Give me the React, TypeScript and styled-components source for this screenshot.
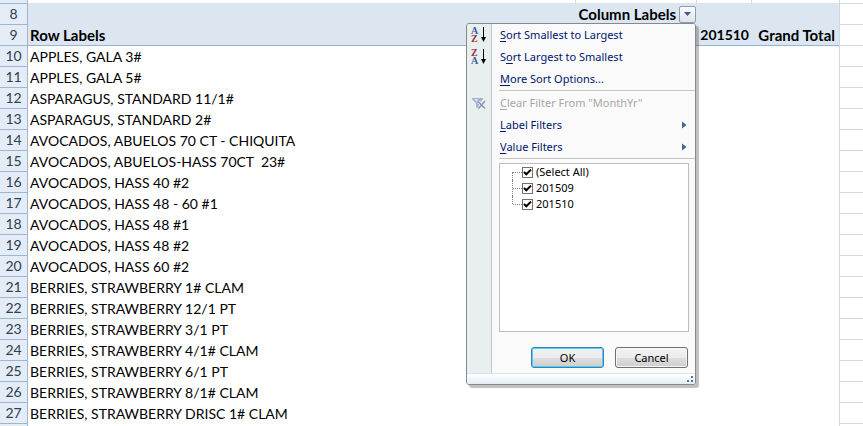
import React from "react";
import styled, { createGlobalStyle, css } from "styled-components";

const Global = createGlobalStyle`
  * { box-sizing: border-box; }
  html, body, #root { margin: 0; height: 100%; background: #fff; }
  body { overflow: hidden; }
  button, input { font: inherit; margin: 0; }
`;

const Sheet = styled.main`
  position: relative;
  min-height: 100%;
  font: 14px/20px Lato, sans-serif;
  color: #000;
`;

const Grid = styled.table`
  width: 100%;
  table-layout: fixed;
  border-collapse: separate;
  border-spacing: 0;
`;

const Col = styled.col<{ $w?: number }>`
  ${(p) => p.$w && css`width: ${p.$w}px;`}
`;

const RowNumber = styled.th`
  height: 21px;
  padding: 0;
  font-weight: 400;
  text-align: center;
  color: #2f4050;
  background: #e4ecf7;
  border-right: 1px solid #9eb6ce;
  border-bottom: 1px solid #9eb6ce;
`;

const Cell = styled.td`
  height: 21px;
  padding: 0 0 0 2px;
  white-space: pre;
`;

const HeadCell = styled.td<{ $last?: boolean; $right?: boolean; $number?: boolean }>`
  height: 21px;
  padding: 0 ${(p) => (p.$number ? 2 : 4)}px 0 2px;
  font-size: ${(p) => (p.$number ? 14 : 15)}px;
  font-weight: 700;
  white-space: nowrap;
  text-align: ${(p) => (p.$right ? "right" : "left")};
  background: #dce6f1;
  border-bottom: 1px solid ${(p) => (p.$last ? "#95b3d7" : "#dce6f1")};
`;

const EmptyCell = styled.td`
  padding: 0;
  border-left: 1px solid #d0d7e5;
  border-bottom: 1px solid #d0d7e5;
`;

const TopCell = styled.td<{ $line?: boolean; $head?: boolean; $outside?: boolean }>`
  height: 4px;
  padding: 0;
  background: ${(p) => (p.$head ? "#e4ecf7" : "#fff")};
  border-right: ${(p) => (p.$head ? "1px solid #9eb6ce" : "0")};
  border-left: ${(p) => (p.$line ? "1px solid #d0d7e5" : "0")};
  border-bottom: 1px solid ${(p) => (p.$head ? "#9eb6ce" : p.$outside ? "#d0d7e5" : "#dce6f1")};
`;

const LabelWithButton = styled.div`
  display: flex;
  justify-content: flex-end;
  align-items: center;
  gap: 3px;
  height: 20px;
  margin-right: -4px;
`;

const DropButton = styled.button`
  display: grid;
  place-items: center;
  width: 17px;
  height: 17px;
  padding: 0;
  border: 1px solid #8a9dbd;
  border-radius: 2px;
  background: linear-gradient(#fbfcfd, #dfe3e9);
`;

const Menu = styled.section`
  position: absolute;
  z-index: 1;
  top: 23px;
  left: 466px;
  width: 230px;
  border: 1px solid #868a8e;
  border-radius: 3px;
  background: #fafafa;
  box-shadow: 3px 3px 1px rgba(0, 0, 0, 0.25);
  font: 11px/16px "Noto Sans", sans-serif;
  overflow: hidden;
`;

const MenuBody = styled.div`
  padding-bottom: 5px;
  background: linear-gradient(to right, #e9eeee 24px, #c5c5c5 24px, #c5c5c5 25px, #fafafa 25px);
`;

const MenuItem = styled.button`
  display: grid;
  grid-template-columns: 25px 1fr 13px;
  align-items: center;
  width: 100%;
  height: 22px;
  padding: 0;
  border: 0;
  background: none;
  text-align: left;
  color: #00156e;
  &:disabled { color: #a7a7a7; }
`;

const ItemText = styled.span`
  padding-left: 8px;
  white-space: nowrap;
  u { text-underline-offset: 2px; }
`;

const Separator = styled.hr`
  height: 1px;
  margin: 0 0 1px 32px;
  border: 0;
  background: #c5c5c5;
`;

const CheckList = styled.div`
  height: 169px;
  margin: 4px 6px 0 32px;
  padding-left: 12px;
  border: 1px solid #bdbdbd;
  background: #fff;
`;

const CheckRow = styled.label<{ $place: "first" | "middle" | "last" }>`
  display: flex;
  align-items: center;
  height: 16px;
  color: #000;
  &::before {
    content: "";
    align-self: ${(p) => (p.$place === "first" ? "flex-end" : "flex-start")};
    width: 0;
    height: ${(p) => (p.$place === "middle" ? 16 : 8)}px;
    border-left: 1px dotted #808080;
  }
`;

const Branch = styled.span`
  width: 9px;
  border-top: 1px dotted #808080;
`;

const CheckInput = styled.input`
  appearance: none;
  width: 11px;
  height: 11px;
  margin-right: 3px;
  border: 1px solid #707070;
  background: #fff;
  &:checked {
    background: #fff url("data:image/svg+xml,%3Csvg xmlns='http://www.w3.org/2000/svg' viewBox='0 0 9 9'%3E%3Cpath d='M1 4 3.3 6.3 8 1.6' fill='none' stroke='black' stroke-width='2'/%3E%3C/svg%3E") center / 9px 9px no-repeat;
  }
`;

const Actions = styled.div`
  display: flex;
  justify-content: flex-end;
  gap: 11px;
  padding: 15px 7px 0 32px;
`;

const ActionButton = styled.button<{ $primary?: boolean }>`
  width: 73px;
  height: 21px;
  padding: 0;
  border: 1px solid ${(p) => (p.$primary ? "#3c7fb1" : "#707070")};
  border-radius: 3px;
  background: linear-gradient(#f2f2f2, #ebebeb 50%, #dddddd 50%, #cfcfcf);
  box-shadow: inset 0 0 0 1px ${(p) => (p.$primary ? "#48d1f5" : "#f7f7f7")};
  line-height: 16px;
  color: #000;
`;

const MenuFoot = styled.footer`
  display: flex;
  justify-content: flex-end;
  align-items: flex-end;
  height: 11px;
  padding: 0 1px 1px 0;
  border-top: 1px solid #d6e5ee;
  background: linear-gradient(#fff, #e2edf3);
`;

const SortIcon = ({ up }: { up?: boolean }) => (
  <svg width="24" height="20" viewBox="0 0 24 20" fontFamily="Liberation Serif, serif" fontWeight="700" fontSize="10">
    <text x="4" y="9" fill={up ? "#3e5c9e" : "#903538"}>{up ? "A" : "Z"}</text>
    <text x="4" y="17" fill={up ? "#903538" : "#3e5c9e"}>{up ? "Z" : "A"}</text>
    <path d="M16.500 2v12" stroke="#000" />
    <path d="M14 12h5l-2.500 5z" fill="#000" />
  </svg>
);

const ClearIcon = () => (
  <svg width="24" height="20" viewBox="0 0 24 20">
    <path d="M5 5h11v1l-4 4.500v6l-3-2.500v-3.500L5 6z" fill="#a3b2cc" />
    <path d="M7 6h4l-1 3z" fill="#dbe3ef" />
    <path d="M11.500 9l6.500 6.500M18 8l-6.500 7.500" stroke="#e9eeee" strokeWidth="3" />
    <path d="M11.500 9l6.500 6.500M18 8l-6.500 7.500" stroke="#8495b5" strokeWidth="1.500" />
  </svg>
);

const Arrow = () => (
  <svg width="5" height="8" viewBox="0 0 5 8"><path d="M0 0.500 4.500 4 0 7.500z" fill="#4a5f9e" /></svg>
);

const rows = [
  "APPLES, GALA 3#",
  "APPLES, GALA 5#",
  "ASPARAGUS, STANDARD 11/1#",
  "ASPARAGUS, STANDARD 2#",
  "AVOCADOS, ABUELOS 70 CT - CHIQUITA",
  "AVOCADOS, ABUELOS-HASS 70CT  23#",
  "AVOCADOS, HASS 40 #2",
  "AVOCADOS, HASS 48 - 60 #1",
  "AVOCADOS, HASS 48 #1",
  "AVOCADOS, HASS 48 #2",
  "AVOCADOS, HASS 60 #2",
  "BERRIES, STRAWBERRY 1# CLAM",
  "BERRIES, STRAWBERRY 12/1 PT",
  "BERRIES, STRAWBERRY 3/1 PT",
  "BERRIES, STRAWBERRY 4/1# CLAM",
  "BERRIES, STRAWBERRY 6/1 PT",
  "BERRIES, STRAWBERRY 8/1# CLAM",
  "BERRIES, STRAWBERRY DRISC 1# CLAM",
];

const checks = [
  { label: "(Select All)", place: "first" },
  { label: "201509", place: "middle" },
  { label: "201510", place: "last" },
] as const;

const FilterMenu = () => (
  <Menu aria-label="Filter menu">
    <MenuBody>
      <MenuItem><SortIcon up /><ItemText><u>S</u>ort Smallest to Largest</ItemText></MenuItem>
      <MenuItem><SortIcon /><ItemText>S<u>o</u>rt Largest to Smallest</ItemText></MenuItem>
      <MenuItem><span /><ItemText><u>M</u>ore Sort Options...</ItemText></MenuItem>
      <Separator />
      <MenuItem disabled><ClearIcon /><ItemText><u>C</u>lear Filter From "MonthYr"</ItemText></MenuItem>
      <MenuItem><span /><ItemText><u>L</u>abel Filters</ItemText><Arrow /></MenuItem>
      <MenuItem><span /><ItemText><u>V</u>alue Filters</ItemText><Arrow /></MenuItem>
      <Separator />
      <CheckList>
        {checks.map((c) => (
          <CheckRow key={c.label} $place={c.place}>
            <Branch /><CheckInput type="checkbox" defaultChecked />{c.label}
          </CheckRow>
        ))}
      </CheckList>
      <Actions>
        <ActionButton $primary>OK</ActionButton>
        <ActionButton>Cancel</ActionButton>
      </Actions>
    </MenuBody>
    <MenuFoot>
      <svg width="7" height="7" viewBox="0 0 7 7" fill="#5b7299">
        <path d="M4 0h2v2h-2zM0 4h2v2h-2zM4 4h2v2h-2z" />
      </svg>
    </MenuFoot>
  </Menu>
);

export default function App() {
  return (
    <Sheet>
      <Global />
      <Grid>
        <colgroup>
          <Col $w={28} /><Col /><Col $w={121} /><Col $w={55} /><Col $w={88} /><Col $w={24} />
        </colgroup>
        <tbody>
          <tr>
            <TopCell $head /><TopCell /><TopCell $line /><TopCell $line /><TopCell $line />
            <TopCell $line $outside />
          </tr>
          <tr>
            <RowNumber scope="row">8</RowNumber>
            <HeadCell />
            <HeadCell $right>
              <LabelWithButton>
                Column Labels
                <DropButton aria-label="Filter column labels">
                  <svg width="7" height="4" viewBox="0 0 7 4"><path d="M0 0h7l-3.500 4z" fill="#3f5585" /></svg>
                </DropButton>
              </LabelWithButton>
            </HeadCell>
            <HeadCell /><HeadCell />
            <EmptyCell />
          </tr>
          <tr>
            <RowNumber scope="row">9</RowNumber>
            <HeadCell $last>Row Labels</HeadCell>
            <HeadCell $last />
            <HeadCell $last $right $number>201510</HeadCell>
            <HeadCell $last $right>Grand Total</HeadCell>
            <EmptyCell />
          </tr>
          {rows.map((text, i) => (
            <tr key={text}>
              <RowNumber scope="row">{i + 10}</RowNumber>
              <Cell colSpan={4}>{text}</Cell>
              <EmptyCell />
            </tr>
          ))}
          <tr>
            <RowNumber />
            <Cell colSpan={4} />
            <EmptyCell />
          </tr>
        </tbody>
      </Grid>
      <FilterMenu />
    </Sheet>
  );
}
